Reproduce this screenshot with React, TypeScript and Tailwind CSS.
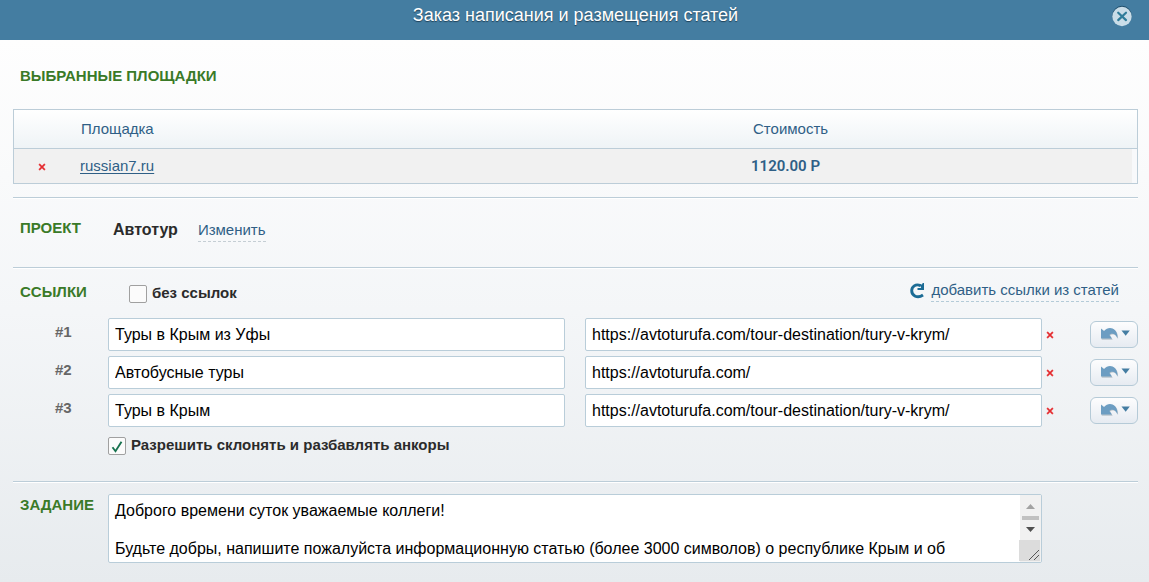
import { useState } from "react";
import type { ReactNode } from "react";

const initialLinks = [
  { n: 1, anchor: "Туры в Крым из Уфы", url: "https://avtoturufa.com/tour-destination/tury-v-krym/" },
  { n: 2, anchor: "Автобусные туры", url: "https://avtoturufa.com/" },
  { n: 3, anchor: "Туры в Крым", url: "https://avtoturufa.com/tour-destination/tury-v-krym/" },
];

const task =
  "Доброго времени суток уважаемые коллеги!\n\nБудьте добры, напишите пожалуйста информационную статью (более 3000 символов) о республике Крым и об";

function CrossIcon() {
  return (
    <svg width="8" height="8" viewBox="0 0 8 8" fill="none">
      <path d="M1 1l6 6M7 1L1 7" stroke="#f08a8a" strokeWidth="2" />
      <path d="M1.3 1.3l5.4 5.4M6.7 1.3L1.3 6.7" stroke="#e22a2f" strokeWidth="1.3" />
    </svg>
  );
}

function CloseIcon() {
  return (
    <svg width="22" height="22" viewBox="0 0 22 22" fill="none">
      <circle cx="11" cy="10.5" r="9.7" fill="#1f4e6b" />
      <circle cx="11" cy="11.5" r="9.7" fill="#c9dde8" />
      <path d="M7.2 7.7l7.800 7.400M15 7.700l-7.800 7.400" stroke="#2f7c9a" strokeWidth="2.200" strokeLinecap="round" />
    </svg>
  );
}

function ReloadIcon() {
  return (
    <svg width="15" height="17" viewBox="0 0 15 17" fill="none">
      <path d="M10.500 3.600C5.500 1.400 1.700 4.800 1.700 8.800C1.700 13.600 7.400 17 13 13" stroke="#1c6c95" strokeWidth="2.900" />
      <path d="M14 1v7H7.500V5.900h3.700L9.500 2.200l2.500.4L12.700 1z" fill="#1c6c95" />
    </svg>
  );
}

function UndoIcon() {
  return (
    <svg width="31" height="13" viewBox="0 0 31 13">
      <path
        d="M2 1.500l3 2.600C7.600 1 11 .300 13.600 1.600c3.400 1.500 5 5.200 4.800 9.800-1-2.800-2.800-4.600-5-4.600-1.600 0-2.400.5-3 1.200l2.600 4H2z"
        fill="#b9c3cb"
        transform="translate(.7 .7)"
      />
      <path
        d="M2 1.500l3 2.600C7.600 1 11 .300 13.600 1.600c3.400 1.500 5 5.200 4.800 9.800-1-2.800-2.800-4.600-5-4.600-1.600 0-2.400.5-3 1.200l2.600 3.600H2z"
        fill="#6c9dc2"
      />
      <path d="M22.500 3.500h8.300l-4.100 5.200z" fill="#447da2" />
    </svg>
  );
}

function Heading({ children }: { children: ReactNode }) {
  return <h2 className="font-bold text-[15px] leading-5 text-[#3a7a28]">{children}</h2>;
}

function Checkbox({ id, checked, onChange }: { id: string; checked: boolean; onChange: (v: boolean) => void }) {
  return (
    <span className="relative flex">
      <input
        id={id}
        type="checkbox"
        checked={checked}
        onChange={(e) => onChange(e.target.checked)}
        className="appearance-none w-[18px] h-[18px] rounded-xs border border-[#a0a0a0] bg-[#fbfbfb]"
      />
      {checked && (
        <svg className="absolute inset-0 pointer-events-none" width="18" height="18" viewBox="0 0 18 18" fill="none">
          <path d="M4.500 10.200l3 4L13.500 4.800" stroke="#17724f" strokeWidth="1.900" />
        </svg>
      )}
    </span>
  );
}

const section = "border-t border-[#bccdd8] shadow-[inset_0_1px_0_#fff]";
const field = "rounded-xs border border-[#b9cdd9] bg-white text-base text-black";

export default function App() {
  const [links, setLinks] = useState(initialLinks);
  const [noLinks, setNoLinks] = useState(false);
  const [allow, setAllow] = useState(true);
  const [text, setText] = useState(task);

  const update = (n: number, patch: { anchor?: string; url?: string }) =>
    setLinks(links.map((l) => (l.n === n ? { ...l, ...patch } : l)));

  return (
    <div className="min-h-screen flex flex-col font-['Liberation_Sans',Arial,sans-serif] text-[15px] text-[#2f5f86]">
      <header className="h-10 flex items-start bg-[#447da1] pl-10 pr-4">
        <h1 className="flex-1 pt-[3px] text-center text-lg leading-6 text-white [text-shadow:0_1px_1px_#1f4057]">
          Заказ написания и размещения статей
        </h1>
        <button aria-label="Закрыть" className="mt-[5px]">
          <CloseIcon />
        </button>
      </header>

      <main className="flex-1 pl-[13px] pr-[11px] bg-linear-to-b from-[#fefefe] via-[#f4f6f8] to-[#e7ebee]">
        <div className="pl-[7px] pt-[26px] pb-[23px]">
          <Heading>ВЫБРАННЫЕ ПЛОЩАДКИ</Heading>
        </div>

        <table className="w-full table-fixed border-separate border-spacing-0 border border-[#bccdd8] text-left">
          <colgroup>
            <col className="w-[66px]" />
            <col />
            <col className="w-[386px]" />
          </colgroup>
          <thead>
            <tr className="h-[39px] bg-linear-to-b from-white to-[#eef3f6]">
              <td className="border-b border-[#bccdd8]" />
              <th className="border-b border-[#bccdd8] font-normal pl-px">Площадка</th>
              <th className="border-b border-[#bccdd8] font-normal pl-0.5">Стоимость</th>
            </tr>
          </thead>
          <tbody>
            <tr className="h-[34px] bg-[#f1f1f1]">
              <td className="pl-6">
                <button aria-label="Удалить" className="block mt-px">
                  <CrossIcon />
                </button>
              </td>
              <td>
                <a href="#" className="underline underline-offset-2">russian7.ru</a>
              </td>
              <td className="border-r-5 border-[#f8f9fb] pl-0 font-['Roboto',sans-serif] font-semibold">1120.00 Р</td>
            </tr>
          </tbody>
        </table>

        <section className={`${section} mt-[13px] h-[70px] flex items-start pl-[7px] pt-5`}>
          <div className="w-[93px]">
            <Heading>ПРОЕКТ</Heading>
          </div>
          <span className="pt-0.5 text-base leading-5 font-bold text-[#2b2b2b]">Автотур</span>
          <a href="#" className="ml-5 mt-px leading-[22px] border-b border-dashed border-[#c5ced4]">
            Изменить
          </a>
        </section>

        <section className={`${section} h-[214px]`}>
          <div className="h-[50px] flex items-start pl-[7px] pr-[19px]">
            <div className="w-[109px] pt-[14px]">
              <Heading>ССЫЛКИ</Heading>
            </div>
            <div className="flex-1 flex items-start gap-[5px] pt-[15px]">
              <span className="pt-0.5">
                <Checkbox id="no-links" checked={noLinks} onChange={setNoLinks} />
              </span>
              <label htmlFor="no-links" className="font-bold leading-5 text-[#2b2b2b]">без ссылок</label>
            </div>
            <div className="flex items-start gap-1.5 pt-[11px]">
              <span className="pt-[3px]">
                <ReloadIcon />
              </span>
              <a href="#" className="pb-px leading-[21px] border-b border-dashed border-[#b4cbd8]">
                добавить ссылки из статей
              </a>
            </div>
          </div>

          <div className="flex flex-col gap-[5px]">
            {links.map((l) => (
              <div key={l.n} className="flex items-center">
                <label htmlFor={`anchor-${l.n}`} className="w-[95px] pl-[42px] pb-1 font-bold text-[#666]">
                  #{l.n}
                </label>
                <input
                  id={`anchor-${l.n}`}
                  value={l.anchor}
                  onChange={(e) => update(l.n, { anchor: e.target.value })}
                  className={`${field} flex-1 min-w-0 h-[33px] px-1.5`}
                />
                <input
                  aria-label={`Адрес ссылки ${l.n}`}
                  value={l.url}
                  onChange={(e) => update(l.n, { url: e.target.value })}
                  className={`${field} ml-5 flex-1 min-w-0 h-[33px] px-1.5`}
                />
                <button
                  aria-label="Удалить ссылку"
                  onClick={() => setLinks(links.filter((x) => x.n !== l.n))}
                  className="w-12 pl-1"
                >
                  <CrossIcon />
                </button>
                <button
                  aria-label="Отменить"
                  className="w-12 h-[27px] flex items-start justify-center rounded-md border border-[#b5cad7] bg-linear-to-b from-[#fdfdfe] to-[#e6ebf1] pt-[5px]"
                >
                  <UndoIcon />
                </button>
              </div>
            ))}
          </div>

          <div className="flex items-start gap-[5px] pl-[95px] pt-2">
            <span className="pt-0.5">
              <Checkbox id="allow" checked={allow} onChange={setAllow} />
            </span>
            <label htmlFor="allow" className="font-bold leading-5 text-[#2b2b2b]">
              Разрешить склонять и разбавлять анкоры
            </label>
          </div>
        </section>

        <section className={`${section} flex items-start pt-3 pb-5 pr-24`}>
          <label htmlFor="task" className="w-[95px] pl-[7px] pt-px">
            <Heading>ЗАДАНИЕ</Heading>
          </label>
          <div className={`${field} flex-1 h-[69px] flex overflow-hidden`}>
            <textarea
              id="task"
              value={text}
              onChange={(e) => setText(e.target.value)}
              className="flex-1 resize-none overflow-hidden px-1.5 pt-1.5 leading-[19px] outline-none"
            />
            <svg width="22" height="67" viewBox="0 0 22 67">
              <path d="M1 0h21v67H1z" fill="#f1f1f1" />
              <path d="M0 45h21v21H0z" fill="#dcdcdc" />
              <path d="M7 14h9l-4.500-5z" fill="#a3a3a3" />
              <path d="M3 21h17v4H3z" fill="#c1c1c1" />
              <path d="M7 32h9l-4.500 5z" fill="#505050" />
              <path d="M10 65l10-10M15 65l5-5" stroke="#555" strokeWidth="1" />
            </svg>
          </div>
        </section>
      </main>
    </div>
  );
}
